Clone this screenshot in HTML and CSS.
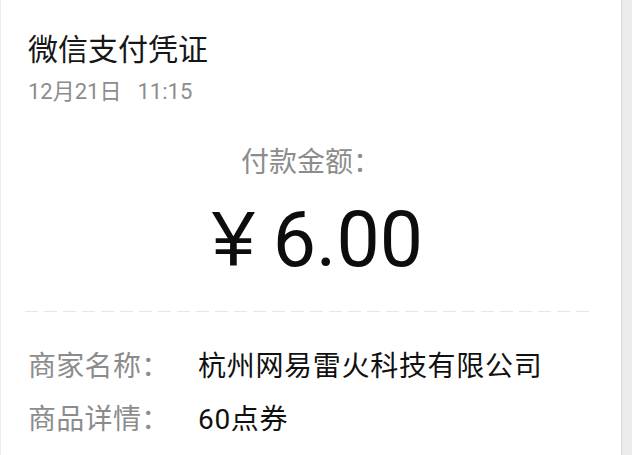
FILE: index.html
```html
<!DOCTYPE html>
<html lang="zh-CN">
<head>
<meta charset="utf-8">
<link rel="stylesheet" href="styles.css">
</head>
<body>
<div class="page">
  <main class="voucher">
    <h1 class="title">微信支付凭证</h1>
    <div class="date"><span>12月21日</span><span class="time">11:15</span></div>
    <div class="amount-label">付款金额：</div>
    <div class="amount"><span class="yen">¥</span><span class="num">6.00</span></div>
    <div class="divider"></div>
    <div class="details">
      <div class="label">商家名称：</div>
      <div class="value">杭州网易雷火科技有限公司</div>
      <div class="label">商品详情：</div>
      <div class="value">60点券</div>
    </div>
  </main>
  <div class="edge"></div>
</div>
</body>
</html>
```
FILE: styles.css
```css
html, body {
  margin: 0;
  padding: 0;
  background: #ffffff;
}
body {
  font-family: "Roboto", "Noto Sans CJK SC", sans-serif;
  width: 632px;
  height: 455px;
  overflow: hidden;
}
.page {
  display: flex;
  height: 455px;
}
.voucher {
  flex: 1;
  border-left: 1px solid #ececec;
  padding: 32px 0 0 27px;
  box-sizing: border-box;
}
.edge {
  width: 10px;
  background: #ebebeb;
  border-left: 1px solid #d9d9d9;
}
.title {
  margin: 0;
  font-weight: 400;
  font-size: 30px;
  line-height: 36px;
  color: #161616;
}
.date {
  margin-top: 11px;
  font-size: 22px;
  line-height: 26px;
  color: #8c8c8c;
}
.time {
  margin-left: 16px;
}
.amount-label {
  margin-top: 41px;
  margin-left: -27px;
  text-align: center;
  font-size: 28px;
  line-height: 34px;
  color: #8c8c8c;
}
.amount {
  margin-top: 14px;
  margin-left: -27px;
  padding-left: 13px;
  text-align: center;
  font-size: 77px;
  line-height: 90px;
  color: #0d0d0d;
}
.yen {
  font-family: "Liberation Sans", sans-serif;
  margin-right: 18px;
}
.divider {
  margin: 26px 31px 0 -3px;
  height: 1px;
  background: repeating-linear-gradient(to right, #e6e6e6 0 13px, transparent 13px 19px);
}
.details {
  margin-top: 28px;
  display: grid;
  grid-template-columns: 170px 1fr;
  font-size: 28px;
  line-height: 53px;
}
.label {
  color: #8c8c8c;
  letter-spacing: 0.3px;
}
.value {
  color: #111111;
  letter-spacing: 0.7px;
}
```
